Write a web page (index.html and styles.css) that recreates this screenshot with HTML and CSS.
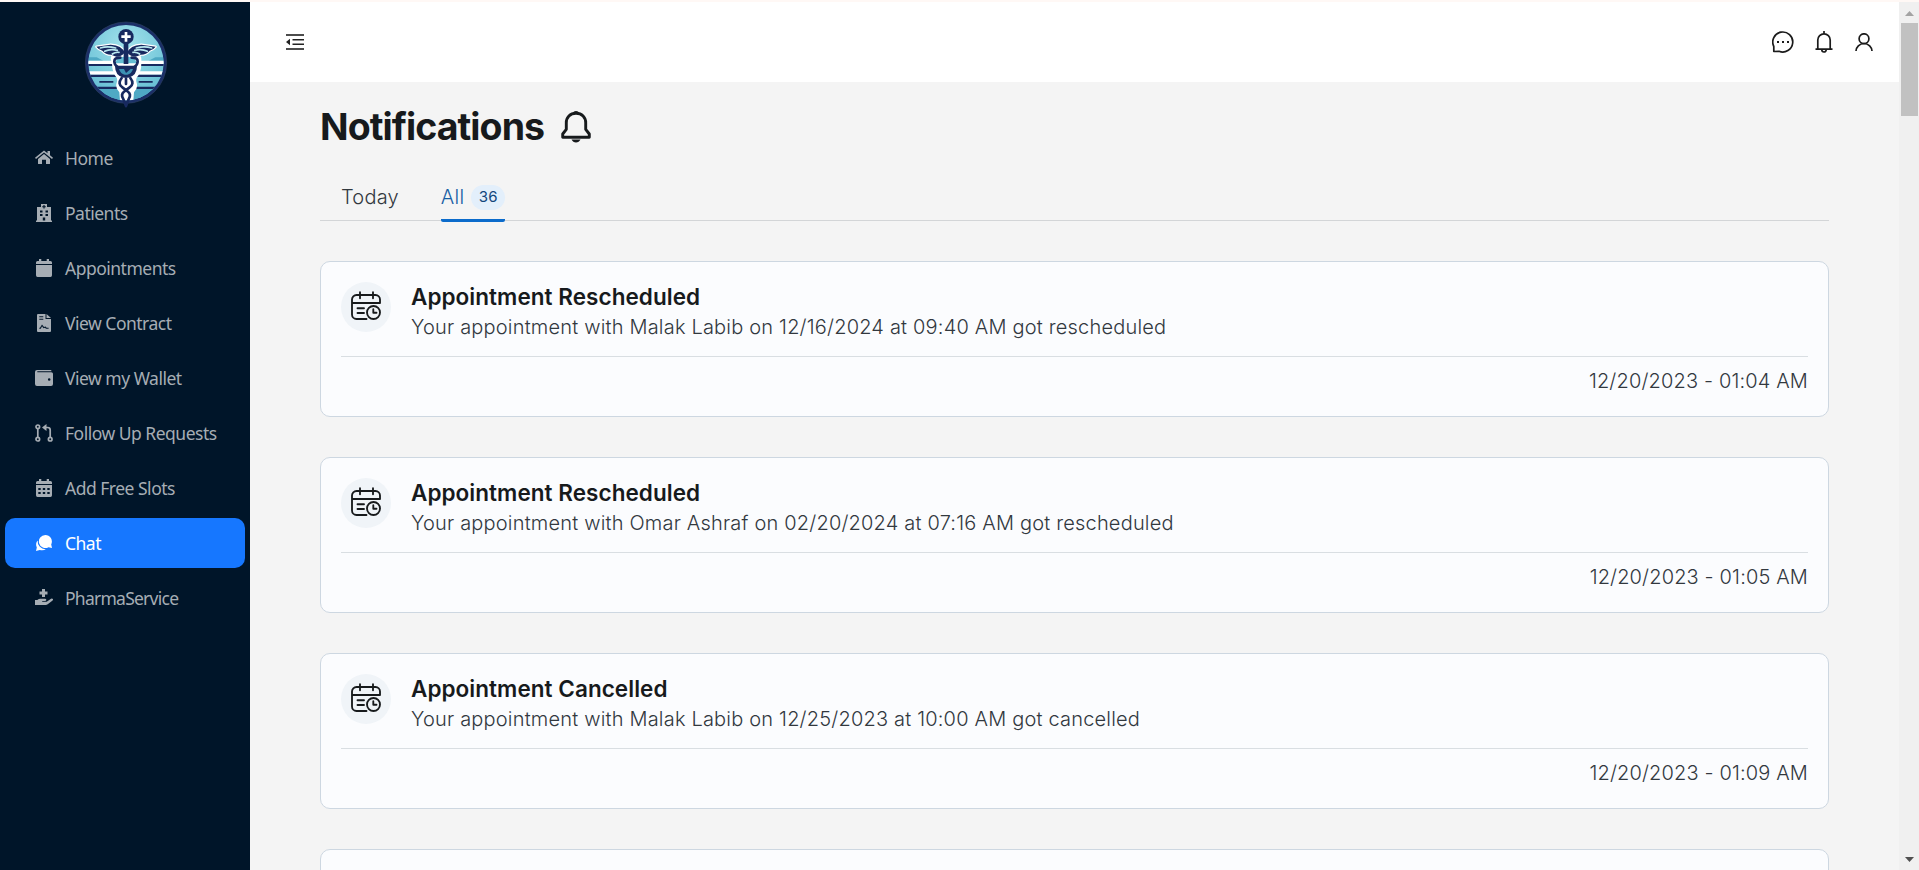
FILE: index.html
```
<!DOCTYPE html>
<html lang="en">
<head>
<meta charset="utf-8">
<title>Notifications</title>
<link rel="stylesheet" href="styles.css">
</head>
<body>
<svg width="0" height="0" class="defs">
  <symbol id="appt" viewBox="0 0 30 30">
    <g fill="none" stroke="currentColor" stroke-width="1.850" stroke-linecap="round" stroke-linejoin="round">
      <path d="M15.500 28H5.500a4.500 4.500 0 0 1-4.500-4.500V8.500a4.500 4.500 0 0 1 4.500-4.500h19a4.500 4.500 0 0 1 4.500 4.500v3.500H1M9 1.200v6M22 1.200v6M6.500 17.200h6.500M6.500 22h6.500"/>
      <circle cx="22.500" cy="21.500" r="6.500"/><path d="M22.300 18.200v3.500h3.200"/>
    </g>
  </symbol>
</svg>
<div class="page">
  <aside class="sidebar">
    <svg class="logo" viewBox="0 0 276 276">
      <defs>
        <clipPath id="disc"><circle cx="138" cy="134" r="113"/></clipPath>
        <radialGradient id="sky" cx=".5" cy=".3" r=".6"><stop offset="0" stop-color="#a3e2ec"/><stop offset="1" stop-color="#63bdd3"/></radialGradient>
      </defs>
      <circle cx="138" cy="134" r="122" fill="#1b2f68" stroke="#2c3f5f" stroke-width="2"/>
      <g clip-path="url(#disc)">
        <rect width="276" height="276" fill="url(#sky)"/>
        <path fill="#4fa9c4" d="M0 212h276v64H0zM0 118h50l20 10H0zM276 118h-50l-20 10h70z"/>
        <path fill="#fff" d="M0 128h276v10H0zM0 160h276v10H0z"/>
        <path fill="#17295f" d="M0 138h276v6H0zM0 170h276v7H0zM58 189h42v5H58zM176 189h42v5h-42zM0 206h276v7H0z"/>
        <path fill="#fff" d="M92 122q0-12 14-15l22 2h20l22-2q14 3 14 15v14q0 28-14 43-3 8 0 15 5 16-8 29l-4 50h-36l-4-50q-13-13-8-29 3-7 0-15-14-15-14-43z"/>
        <path fill="#64bdd3" d="M112 122q12-7 24-5h4q12-2 24 5l8 14h-68z"/>
      </g>
      <g stroke="#fff" stroke-linejoin="round" fill="#fff">
        <path d="M134 104q-8-22-42-24l-43 6q8 10 18 12 10 12 26 12l16 6q15 0 25-12zM142 104q8-22 42-24l43 6q-8 10-18 12-10 12-26 12l-16 6q-15 0-25-12z" stroke-width="7"/>
      </g>
      <path fill="#17295f" d="M134 104q-8-22-42-24l-43 6q8 10 18 12 10 12 26 12l16 6q15 0 25-12zM142 104q8-22 42-24l43 6q-8 10-18 12-10 12-26 12l-16 6q-15 0-25-12z"/>
      <path fill="none" stroke="#b9e7ef" stroke-width="5" stroke-linecap="round" d="M61 90q22-7 46 0M74 100q16-8 38-3M97 108q8-6 20-5M215 90q-22-7-46 0M202 100q-16-8-38-3M179 108q-8-6-20-5"/>
      <circle cx="138" cy="56" r="23" fill="#17295f"/>
      <path fill="#fff" d="M134 42h8v10h10v8h-10v11h-8V60h-10v-8h10z"/>
      <path fill="#17295f" d="M131 76h14v62h-14z"/>
      <path fill="#17295f" d="M105 143h66q0 30-26 36h-14q-26-6-26-36z"/>
      <path fill="#3b91b3" d="M117 153h42q-5 15-17 17h-8q-12-2-17-17z"/>
      <path fill="#17295f" d="m132 153 6 12 14-12z"/>
      <path fill="none" stroke="#17295f" stroke-width="8" stroke-linecap="round" d="M121 119q-18 0-18 11t9 16M155 119q18 0 18 11t-9 16M125 180q-14 18 3 29l16 12q10 8 3 20l-9 23M151 180q14 18-3 29l-16 12q-10 8-3 20l9 23M138 182v16"/>
    </svg>
    <nav class="menu">
      <a class="item"><svg viewBox="0 0 18 18"><path d="M9 1.500 12.500 4.300V2H15v4.300L18 8.800l-1 1.200L9 3.600 1 10 0 8.800z"/><path d="M9 5l6 4.900v4.600q0 .5-.5.5H11v-4.200H7V15H3.500q-.5 0-.5-.5V9.900z"/></svg><span>Home</span></a>
      <a class="item"><svg viewBox="0 0 18 18"><path fill-rule="evenodd" d="M6 0h6v3h4v13.500h1V18H1v-1.500h1V3h4zM8.400 1v1.200H7.200v1.100h1.200v1.200h1.200V3.300h1.200V2.200H9.600V1zM5 6.500v2h2.500v-2zm5.500 0v2H13v-2zM5 10v2h2.500v-2zm5.500 0v2H13v-2zM7.800 13.500v3h2.400v-3z"/></svg><span>Patients</span></a>
      <a class="item"><svg viewBox="0 0 18 18"><path d="M1 3.500Q1 2 2.500 2H4V0h2.300v2h5.400V0H14v2h1.500Q17 2 17 3.500V5H1zM1 6h16v10.300Q17 18 15.500 18h-13Q1 18 1 16.300z"/></svg><span>Appointments</span></a>
      <a class="item"><svg viewBox="0 0 18 18"><path fill-rule="evenodd" d="M3 0h7.500v5H16v12q0 1-1 1H3q-1 0-1-1V1q0-1 1-1zm1.300 2.300v1h4v-1zm0 2.400v1h4v-1zM4.300 14.800h1.500l1.200-2.600 1.500 2 1.500-.4 1 1h2.600v-1h-2l-1-1.300-1.600.5L7 10.500l-2 3.300h-.7z"/><path d="M11.500 0 16 4h-4.500z"/></svg><span>View Contract</span></a>
      <a class="item"><svg viewBox="0 0 18 18"><path fill-rule="evenodd" d="M2 1h13.500q1 0 1 1.200H2.300v1h14q1.700 0 1.700 1.500V15q0 2-2 2H2q-2 0-2-2V3q0-2 2-2zm12.200 8.200a1.300 1.300 0 1 0 0 2.600 1.300 1.300 0 0 0 0-2.600z"/></svg><span>View my Wallet</span></a>
      <a class="item"><svg viewBox="0 0 18 18"><g fill="none" stroke="currentColor" stroke-width="1.700"><circle cx="2.800" cy="2.800" r="1.800"/><circle cx="2.800" cy="15.200" r="1.800"/><circle cx="15.200" cy="15.200" r="1.800"/><path d="M2.800 4.600v8.800M15.200 13.400V6q0-2.500-2.500-2.500H10"/></g><path d="M11.500 0v7L7 3.500z"/></svg><span>Follow Up Requests</span></a>
      <a class="item"><svg viewBox="0 0 18 18"><path fill-rule="evenodd" d="M1 3.500Q1 2 2.500 2H4V0h2.300v2h5.400V0H14v2h1.500Q17 2 17 3.500V5H1zM1 6h16v10.300Q17 18 15.500 18h-13Q1 18 1 16.300zM3.300 9v2h2.400V9zm4.500 0v2h2.400V9zm4.500 0v2h2.400V9zM3.300 13v2h2.400v-2zm4.500 0v2h2.400v-2zm4.500 0v2h2.400v-2z"/></svg><span>Add Free Slots</span></a>
      <a class="item active"><svg viewBox="0 0 18 18"><path d="M10.300 1a6.500 6.500 0 0 1 5.900 9.400l.8 3.500-3.500-.7A6.500 6.500 0 1 1 10.300 1z"/><path d="M2.700 6.500a7.700 7.700 0 0 0 8.500 8.600q-2.700 1.900-6.400.9L1 17l.8-3.600Q0 9.500 2.700 6.500z"/></svg><span>Chat</span></a>
      <a class="item pharma"><svg viewBox="0 0 18 18"><path d="M7 0h3v2.500h2.500v3H10V8H7V5.500H4.500v-3H7zM0 11h2.300q1.500-1.300 3-1.300H10q1.500 0 1.300 1.300-.2 1-1.300 1H7.200v.8h4.500L16 9.800q1.200-.6 1.900.2.400.9-.6 1.700l-4.600 3.600q-.9.700-2 .7H0z"/></svg><span>PharmaService</span></a>
    </nav>
  </aside>
  <main class="main">
    <header class="topbar">
      <svg class="fold" viewBox="0 0 18 16"><path fill="#4c4c4c" d="M0 0h18v2H0zM0 14h18v2H0z"/><path fill="#222" d="M6.500 5H18v1.400H6.500zM6.500 9.600H18V11H6.500zM0 8l4-3.200v6.400z"/></svg>
      <div class="tools">
        <svg width="22" height="22" viewBox="0 0 22 22" fill="none" stroke="#1b1b1b" stroke-width="1.700"><path d="M1.800 20.500v-5A10 10 0 1 1 7 20.300z" stroke-linejoin="round"/><path stroke="none" fill="#1b1b1b" d="M5 10h2v2H5zM10 10h2v2h-2zM15 10h2v2h-2z"/></svg>
        <svg width="18" height="22" viewBox="0 0 18 22" fill="none" stroke="#1b1b1b" stroke-width="1.700"><path d="M9 0v3M2.800 18V9a6.200 6.200 0 0 1 12.400 0v9M.5 18.200h17M6.800 18.800a2.200 2.200 0 0 0 4.400 0"/></svg>
        <svg width="18" height="18" viewBox="0 0 18 18" fill="none" stroke="#1b1b1b" stroke-width="1.700"><circle cx="9" cy="5.700" r="4.900"/><path d="M1 18.300a8 7.800 0 0 1 16 0"/></svg>
      </div>
    </header>
    <section class="content">
      <h1 class="title"><span>Notifications</span>
        <svg width="30" height="32" viewBox="0 0 30 32" fill="none" stroke="#171a1c" stroke-width="2.900" stroke-linejoin="round"><path d="M15 2.300c-6 0-9.700 4-9.700 9.500v6.500L1.700 23v3.200h26.600V23l-3.600-4.700v-6.500c0-5.500-3.700-9.500-9.700-9.500z"/><path stroke="none" fill="#171a1c" d="M13 .6q2-1 4 0l1.500 2h-7zM10.500 28.500h9q-1.500 3-4.500 3t-4.500-3z"/></svg>
      </h1>
      <div class="tabs">
        <div class="tab">Today</div>
        <div class="tab current"><span class="label">All</span><span class="count">36</span></div>
      </div>
      <div class="cards">
        <article class="card"><div class="row"><div class="avatar"><svg><use href="#appt"/></svg></div><div class="body"><h2>Appointment Rescheduled</h2><p>Your appointment with Malak Labib on 12/16/2024 at 09:40 AM got rescheduled</p></div></div><div class="time">12/20/2023 - 01:04 AM</div></article>
        <article class="card"><div class="row"><div class="avatar"><svg><use href="#appt"/></svg></div><div class="body"><h2>Appointment Rescheduled</h2><p>Your appointment with Omar Ashraf on 02/20/2024 at 07:16 AM got rescheduled</p></div></div><div class="time">12/20/2023 - 01:05 AM</div></article>
        <article class="card"><div class="row"><div class="avatar"><svg><use href="#appt"/></svg></div><div class="body"><h2>Appointment Cancelled</h2><p>Your appointment with Malak Labib on 12/25/2023 at 10:00 AM got cancelled</p></div></div><div class="time">12/20/2023 - 01:09 AM</div></article>
        <article class="card"></article>
      </div>
    </section>
  </main>
  <div class="scrollbar">
    <svg width="9" height="5" viewBox="0 0 9 5"><path fill="#a3a3a3" d="M0 5 4.500 0 9 5z"/></svg>
    <div class="thumb"></div>
    <svg width="9" height="5" viewBox="0 0 9 5"><path fill="#505050" d="M0 0h9L4.500 5z"/></svg>
  </div>
</div>
</body>
</html>
```
FILE: styles.css
```
* { box-sizing: border-box; }
body { margin: 0; height: 870px; overflow: hidden; background: #fff8f5; padding-top: 2px; font-family: Inter, sans-serif; }
.defs { position: absolute; }
.page { display: flex; height: 868px; }

.sidebar { width: 250px; flex: none; background: #001529; padding: 16px 5px 0; }
.logo { display: block; width: 92px; height: 92px; margin: 0 0 0 75px; }
.menu { display: flex; flex-direction: column; gap: 5px; margin-top: 23px; }
.item { display: flex; align-items: center; gap: 12px; height: 50px; padding-left: 30px; border-radius: 10px; color: #a6adb4; font: 17.5px/51px "Noto Sans", sans-serif; letter-spacing: -0.5px; white-space: nowrap; }
.item svg { width: 18px; height: 18px; fill: currentColor; flex: none; }
.item.active { background: #1677ff; color: #fff; }
.item.pharma { letter-spacing: -0.75px; }

.main { width: 1649px; flex: none; background: #f4f4f4; overflow: hidden; }
.topbar { height: 80px; background: #fff; display: flex; align-items: center; justify-content: space-between; padding: 0 26px 0 36px; }
.fold { width: 18px; height: 16px; }
.tools { display: flex; align-items: center; gap: 22px; }
.tools svg { display: block; }
.tools svg:first-child { margin-right: -1px; }

.content { padding: 0 70px; }
.title { display: flex; align-items: center; gap: 17px; height: 48px; margin: 21px 0 0; color: #171a1c; font-size: 37.5px; line-height: 48px; font-weight: 700; letter-spacing: -0.94px; }
.tabs { display: flex; gap: 42px; height: 49px; margin-top: 21px; padding-left: 21px; line-height: 51px; border-bottom: 1px solid #d3d5d7; color: #32383e; font-size: 20px; font-weight: 300; letter-spacing: 0.2px; }
.tab.current { display: flex; align-items: center; gap: 7px; height: 50px; color: #185ea5; border-bottom: 3px solid #0b6bcb; border-radius: 2px; }
.label { padding-top: 3px; }
.count { width: 34px; height: 25px; margin-top: 3px; border-radius: 13px; background: #e3effb; color: #12467b; font-size: 15px; line-height: 24px; font-weight: 400; text-align: center; }

.cards { display: flex; flex-direction: column; gap: 40px; margin-top: 40px; }
.card { height: 156px; border: 1px solid #cdd7e1; border-radius: 10px; background: #fbfcfe; padding: 20px; }
.row { display: flex; gap: 20px; height: 75px; border-bottom: 1px solid #d9dee2; }
.avatar { width: 50px; height: 50px; border-radius: 50%; background: #f0f4f8; display: flex; align-items: center; justify-content: center; color: #171a1c; }
.avatar svg { width: 30px; height: 30px; margin-bottom: 2px; }
.body h2 { margin: 0; color: #171a1c; font-size: 22.5px; line-height: 30px; font-weight: 600; letter-spacing: 0.05px; }
.body p { margin: 0; color: #32383e; font-size: 20px; line-height: 30px; font-weight: 300; letter-spacing: 0.19px; white-space: nowrap; }
.time { color: #32383e; text-align: right; font-size: 20px; line-height: 48px; font-weight: 300; letter-spacing: 0.15px; }

.scrollbar { width: 20px; background: #f0f0f0; display: flex; flex-direction: column; align-items: center; padding: 9px 0 8px; }
.thumb { width: 17px; height: 93px; margin: 7px 0 auto 0; background: #c1c1c1; }
```
